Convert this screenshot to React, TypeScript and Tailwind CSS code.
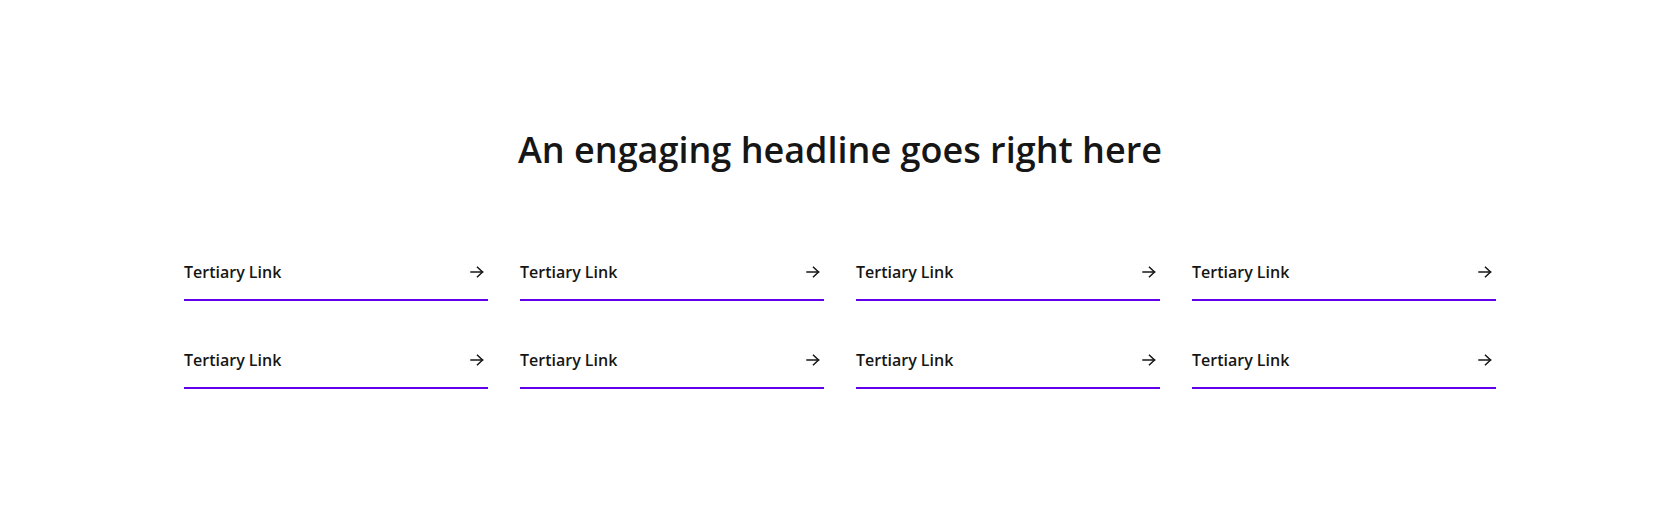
import React from "react";

function Arrow() {
  return (
    <svg width="14" height="12" viewBox="0 0 14 12" fill="none" stroke="#161616" strokeWidth="1.5" strokeLinecap="square" strokeLinejoin="miter">
      <path d="M1 6H12.5" />
      <path d="M7.5 1.2L12.5 6L7.5 10.8" />
    </svg>
  );
}

function LinkItem() {
  return (
    <a
      href="#"
      className="flex items-center justify-between pt-2 pb-[15px] border-b-2 border-[#6200ee] text-[#161616]"
    >
      <span className="text-[16px] leading-6 font-semibold">Tertiary Link</span>
      <span className="mr-[4px] flex items-center">
        <Arrow />
      </span>
    </a>
  );
}

export default function App() {
  const items = Array.from({ length: 8 });
  return (
    <div
      className="w-full bg-white pt-[128px] pb-[143px] px-[184px]"
      style={{ fontFamily: '"Open Sans", "Noto Sans", sans-serif' }}
    >
      <h1 className="text-center text-[36px] leading-[44px] font-semibold text-[#161616]">
        An engaging headline goes right here
      </h1>
      <div className="mt-[80px] grid grid-cols-4 gap-x-8 gap-y-[39px]">
        {items.map((_, i) => (
          <LinkItem key={i} />
        ))}
      </div>
    </div>
  );
}
